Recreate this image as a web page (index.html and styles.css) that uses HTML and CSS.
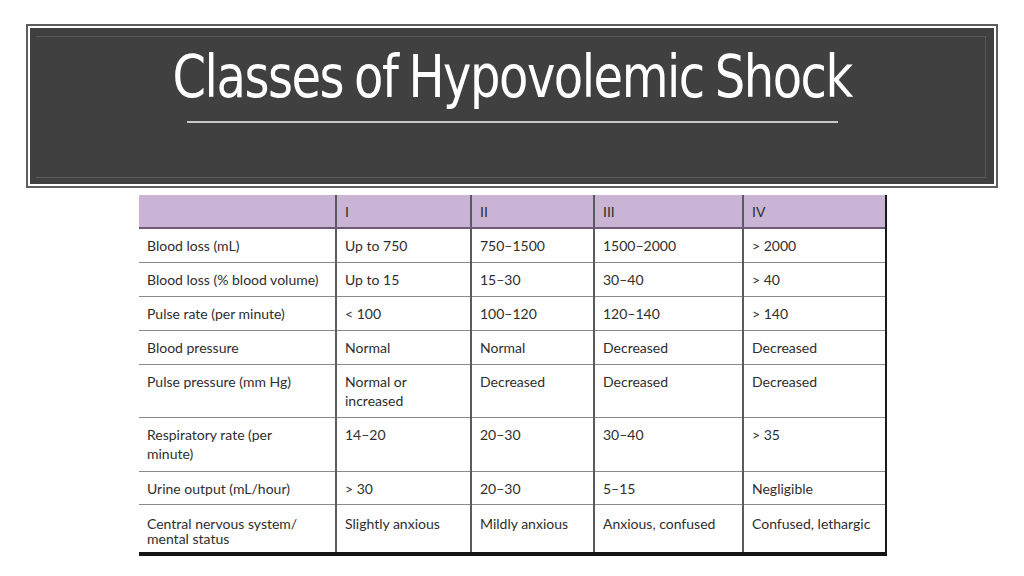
FILE: index.html
```html
<!DOCTYPE html>
<html>
<head>
<meta charset="utf-8">
<link rel="stylesheet" href="styles.css">
</head>
<body>
<div class="slide">
  <header class="banner">
    <div class="banner-inner">
      <h1 class="title">Classes of Hypovolemic Shock</h1>
      <div class="rule"></div>
    </div>
  </header>
  <div class="table-wrap">
    <table class="shock">
      <colgroup>
        <col class="c0"><col class="c1"><col class="c2"><col class="c3"><col class="c4">
      </colgroup>
      <thead>
        <tr class="head"><th></th><th>I</th><th>II</th><th>III</th><th>IV</th></tr>
      </thead>
      <tbody>
        <tr class="r34"><td>Blood loss (mL)</td><td>Up to 750</td><td>750–1500</td><td>1500–2000</td><td>&gt; 2000</td></tr>
        <tr class="r34"><td>Blood loss (% blood volume)</td><td>Up to 15</td><td>15–30</td><td>30–40</td><td>&gt; 40</td></tr>
        <tr class="r34"><td>Pulse rate (per minute)</td><td>&lt; 100</td><td>100–120</td><td>120–140</td><td>&gt; 140</td></tr>
        <tr class="r34"><td>Blood pressure</td><td>Normal</td><td>Normal</td><td>Decreased</td><td>Decreased</td></tr>
        <tr class="r53"><td>Pulse pressure (mm Hg)</td><td>Normal or<br>increased</td><td>Decreased</td><td>Decreased</td><td>Decreased</td></tr>
        <tr class="r54"><td>Respiratory rate (per<br>minute)</td><td>14–20</td><td>20–30</td><td>30–40</td><td>&gt; 35</td></tr>
        <tr class="r33"><td>Urine output (mL/hour)</td><td>&gt; 30</td><td>20–30</td><td>5–15</td><td>Negligible</td></tr>
        <tr class="r48 tight"><td>Central nervous system/<br>mental status</td><td>Slightly anxious</td><td>Mildly anxious</td><td>Anxious, confused</td><td>Confused, lethargic</td></tr>
      </tbody>
    </table>
  </div>
</div>
</body>
</html>
```
FILE: styles.css
```css
html, body {
  margin: 0;
  padding: 0;
  background: #ffffff;
}
.slide {
  width: 1024px;
  height: 576px;
  overflow: hidden;
  padding-top: 24px;
  box-sizing: border-box;
}
.banner {
  margin-left: 26px;
  width: 972px;
  height: 164px;
  box-sizing: border-box;
  border: 2px solid #5e5e5e;
  padding: 2px;
  background: #ffffff;
}
.banner-inner {
  height: 100%;
  box-sizing: border-box;
  background: #404040;
  border-top: 6px solid #404040;
  position: relative;
  display: flex;
  flex-direction: column;
  align-items: center;
}
.banner-inner::before {
  content: "";
  position: absolute;
  left: 6px;
  right: 8px;
  top: 2px;
  bottom: 6px;
  border-top: 1px solid #565656;
  border-bottom: 1px solid #5a5a5a;
  border-right: 1px solid #565656;
}
.title {
  margin: 12px 0 0 0;
  font-family: "DejaVu Sans", sans-serif;
  font-stretch: condensed;
  font-weight: normal;
  font-size: 58px;
  line-height: 62px;
  color: #ffffff;
  letter-spacing: -1.6px;
  word-spacing: -3px;
  transform: scaleX(0.92);
  white-space: nowrap;
}
.rule {
  margin-top: 13px;
  width: 651px;
  height: 2px;
  background: #c8c8c8;
}
.table-wrap {
  margin-top: 7px;
  margin-left: 139px;
  width: 748px;
  border-right: 2px solid #1a1a1a;
  border-bottom: 4px solid #151515;
  box-sizing: border-box;
}
.shock {
  border-collapse: collapse;
  width: 746px;
  table-layout: fixed;
  font-family: "Lato", sans-serif;
  font-size: 14px;
  color: #2e2e2e;
}
.c0 { width: 197px; }
.c1 { width: 135px; }
.c2 { width: 123px; }
.c3 { width: 149px; }
.c4 { width: 142px; }
.shock th, .shock td {
  text-align: left;
  vertical-align: top;
  padding: 7px 7px 0 8px;
  line-height: 19px;
  font-weight: normal;
  border-left: 2px solid #5a5a5a;
  border-top: 1px solid #8a8a8a;
  white-space: nowrap;
}
.shock tr > :first-child { border-left: none; }
.head th {
  background: #c9b4d5;
  height: 33px;
  border-top: none;
  box-sizing: border-box;
  border-bottom: 2px solid #6e5a78;
}
.r34 td { height: 34px; box-sizing: border-box; }
.r33 td { height: 33px; box-sizing: border-box; }
.r53 td { height: 53px; box-sizing: border-box; }
.r54 td { height: 54px; box-sizing: border-box; }
.r48 td { height: 48px; box-sizing: border-box; }
.tight td { line-height: 15px; padding-top: 11px; }
```
